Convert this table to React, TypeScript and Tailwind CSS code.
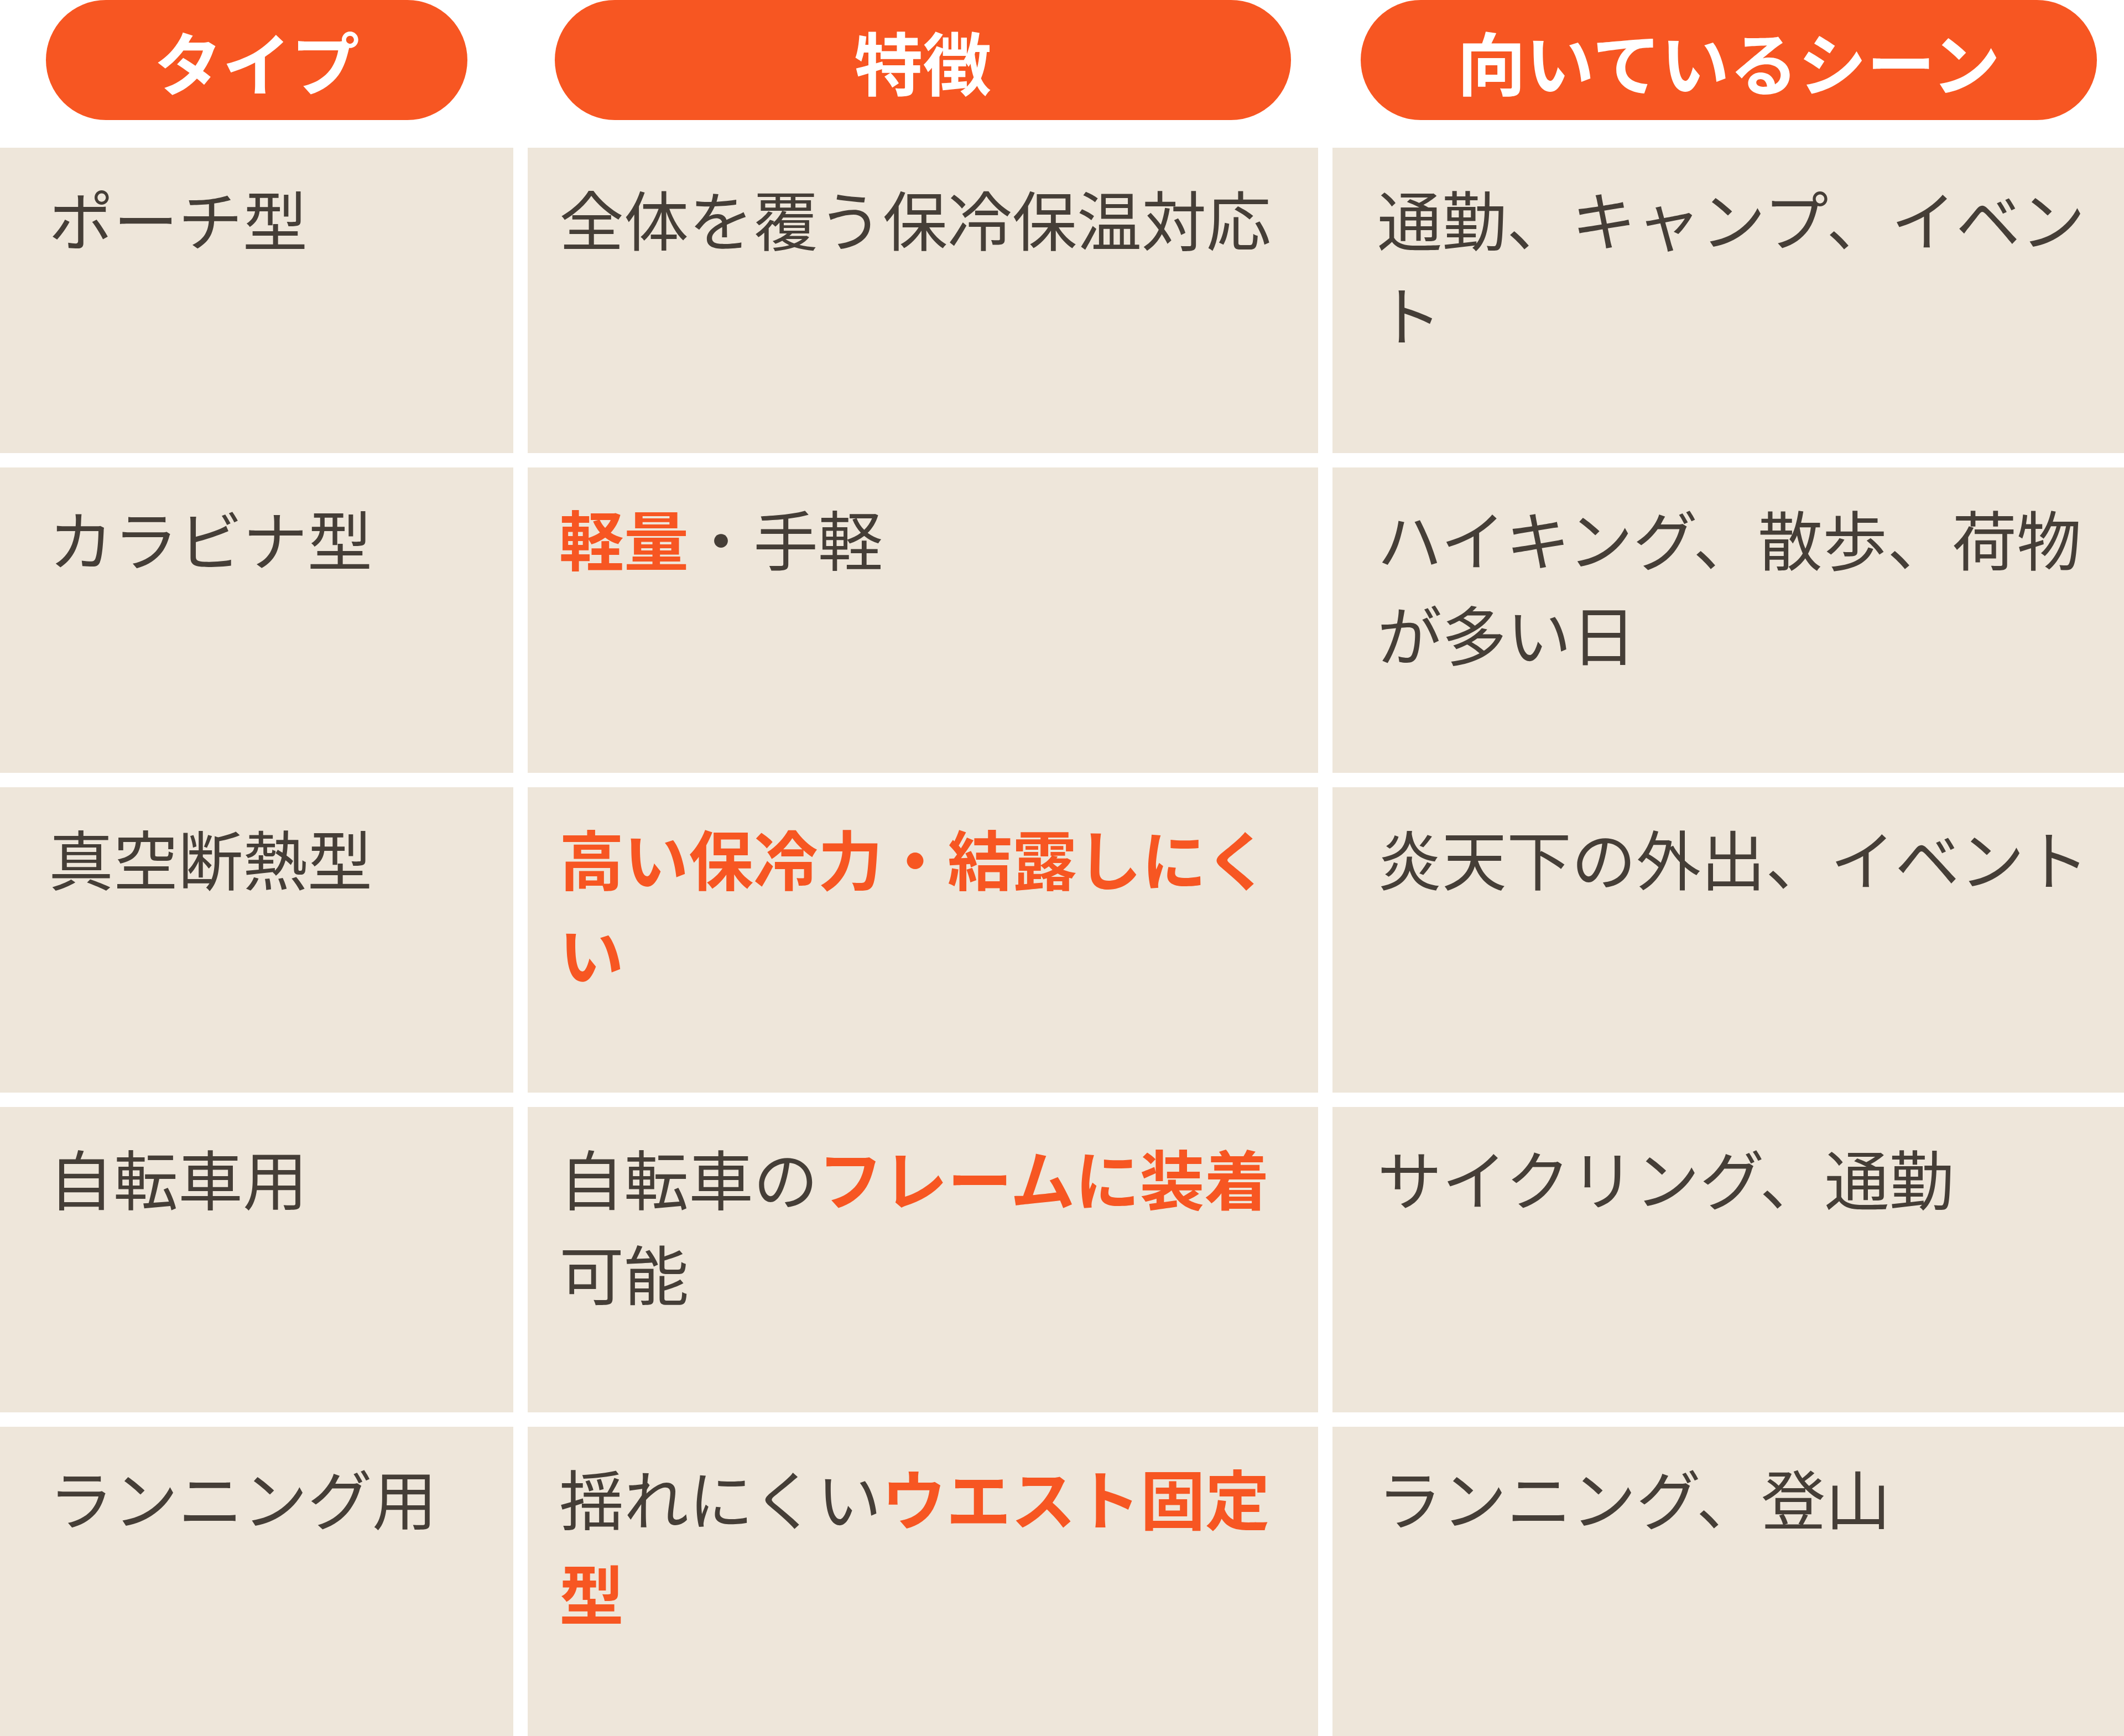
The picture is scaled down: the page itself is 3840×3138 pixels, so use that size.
import React from "react";

type Part = {text: string; hot?: boolean};

const rows: {type: string; feature: Part[]; scene: string}[] = [
  {
    type: "ポーチ型",
    feature: [{text: "全体を覆う保冷保温対応"}],
    scene: "通勤、キャンプ、イベント",
  },
  {
    type: "カラビナ型",
    feature: [{text: "軽量", hot: true}, {text: "・手軽"}],
    scene: "ハイキング、散歩、荷物が多い日",
  },
  {
    type: "真空断熱型",
    feature: [{text: "高い保冷力・結露しにくい", hot: true}],
    scene: "炎天下の外出、イベント",
  },
  {
    type: "自転車用",
    feature: [
      {text: "自転車の"},
      {text: "フレームに装着", hot: true},
      {text: "可能"},
    ],
    scene: "サイクリング、通勤",
  },
  {
    type: "ランニング用",
    feature: [{text: "揺れにくい"}, {text: "ウエスト固定型", hot: true}],
    scene: "ランニング、登山",
  },
];

export default function App() {
  return (
    <div className="w-[3840px] h-[3138px] overflow-hidden bg-white font-['Noto_Sans_CJK_JP',sans-serif]">
      {/* header pills */}
      <div className="grid grid-cols-[928px_1429px_1fr] gap-x-[26px]">
        <div className="mx-[83px] h-[217px] rounded-full bg-[#f75622] flex items-center justify-center text-white font-bold text-[124px] leading-none">
          タイプ
        </div>
        <div className="mx-[49px] h-[217px] rounded-full bg-[#f75622] flex items-center justify-center text-white font-bold text-[124px] leading-none">
          特徴
        </div>
        <div className="ml-[51px] mr-[49px] h-[217px] rounded-full bg-[#f75622] flex items-center justify-center text-white font-bold text-[124px] leading-none">
          向いているシーン
        </div>
      </div>

      {/* body */}
      <div className="mt-[50px] grid grid-cols-[928px_1429px_1fr] gap-[26px] text-[117px] leading-[172px] text-[#453e37]">
        {rows.map((row, i) => {
          const h = i === rows.length - 1 ? "h-[559px]" : "h-[552px]";
          return (
            <React.Fragment key={row.type}>
              <div className={`${h} bg-[#eee6da] pl-[88px] pr-[30px] pt-[40px]`}>
                {row.type}
              </div>
              <div className={`${h} bg-[#eee6da] pl-[57px] pr-[40px] pt-[40px]`}>
                {row.feature.map((p, j) =>
                  p.hot ? (
                    <span key={j} className="font-bold text-[#f75622]">
                      {p.text}
                    </span>
                  ) : (
                    <span key={j}>{p.text}</span>
                  )
                )}
              </div>
              <div className={`${h} bg-[#eee6da] pl-[81px] pr-[40px] pt-[40px]`}>
                {row.scene}
              </div>
            </React.Fragment>
          );
        })}
      </div>
    </div>
  );
}
